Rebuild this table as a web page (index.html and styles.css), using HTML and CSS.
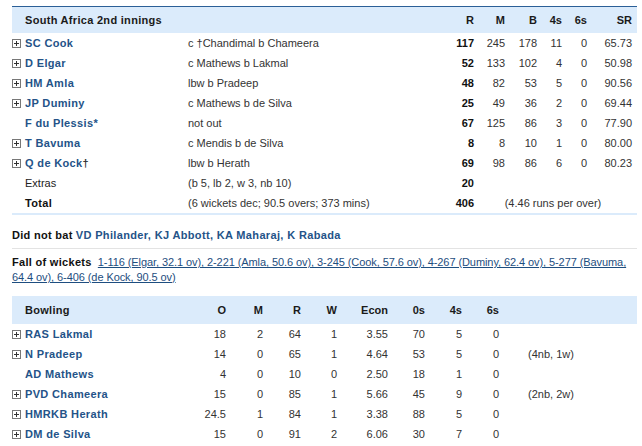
FILE: index.html
```html
<!DOCTYPE html>
<html>
<head>
<meta charset="utf-8">
<link rel="stylesheet" href="styles.css">
</head>
<body>
<div class="page">
  <table class="card bat">
    <colgroup>
      <col class="c-icon"><col class="c-name"><col class="c-dis"><col class="c-r"><col class="c-m"><col class="c-b"><col class="c-4"><col class="c-6"><col class="c-sr"><col class="c-pad">
    </colgroup>
    <thead>
      <tr class="head">
        <th></th><th class="l" colspan="2">South Africa 2nd innings</th><th>R</th><th>M</th><th>B</th><th>4s</th><th>6s</th><th>SR</th><th></th>
      </tr>
    </thead>
    <tbody>
      <tr><td class="ic"><span class="plus"></span></td><td class="name">SC Cook</td><td class="dis">c †Chandimal b Chameera</td><td class="runs">117</td><td>245</td><td>178</td><td>11</td><td>0</td><td>65.73</td><td></td></tr>
      <tr><td class="ic"><span class="plus"></span></td><td class="name">D Elgar</td><td class="dis">c Mathews b Lakmal</td><td class="runs">52</td><td>133</td><td>102</td><td>4</td><td>0</td><td>50.98</td><td></td></tr>
      <tr><td class="ic"><span class="plus"></span></td><td class="name">HM Amla</td><td class="dis">lbw b Pradeep</td><td class="runs">48</td><td>82</td><td>53</td><td>5</td><td>0</td><td>90.56</td><td></td></tr>
      <tr><td class="ic"><span class="plus"></span></td><td class="name">JP Duminy</td><td class="dis">c Mathews b de Silva</td><td class="runs">25</td><td>49</td><td>36</td><td>2</td><td>0</td><td>69.44</td><td></td></tr>
      <tr><td class="ic"></td><td class="name">F du Plessis*</td><td class="dis">not out</td><td class="runs">67</td><td>125</td><td>86</td><td>3</td><td>0</td><td>77.90</td><td></td></tr>
      <tr><td class="ic"><span class="plus"></span></td><td class="name">T Bavuma</td><td class="dis">c Mendis b de Silva</td><td class="runs">8</td><td>8</td><td>10</td><td>1</td><td>0</td><td>80.00</td><td></td></tr>
      <tr><td class="ic"><span class="plus"></span></td><td class="name">Q de Kock<span class="dag">†</span></td><td class="dis">lbw b Herath</td><td class="runs">69</td><td>98</td><td>86</td><td>6</td><td>0</td><td>80.23</td><td></td></tr>
      <tr><td class="ic"></td><td class="plain">Extras</td><td class="dis">(b 5, lb 2, w 3, nb 10)</td><td class="runs">20</td><td colspan="6"></td></tr>
      <tr class="total"><td class="ic"></td><td class="plain strong">Total</td><td class="dis">(6 wickets dec; 90.5 overs; 373 mins)</td><td class="runs">406</td><td class="rpo" colspan="5">(4.46 runs per over)</td><td></td></tr>
    </tbody>
  </table>

  <p class="dnb"><b class="lbl">Did not bat</b> <span class="lk">VD Philander, KJ Abbott, KA Maharaj, K Rabada</span></p>

  <p class="fow"><b class="lbl">Fall of wickets</b>&nbsp; <span class="ul">1-116 (Elgar, 32.1 ov), 2-221 (Amla, 50.6 ov), 3-245 (Cook, 57.6 ov), 4-267 (Duminy, 62.4 ov), 5-277 (Bavuma,</span><br><span class="ul">64.4 ov), 6-406 (de Kock, 90.5 ov)</span></p>

  <table class="card bowl">
    <colgroup>
      <col class="b-icon"><col class="b-name"><col class="b-o"><col class="b-m"><col class="b-r"><col class="b-w"><col class="b-econ"><col class="b-0"><col class="b-4"><col class="b-6"><col class="b-gap"><col class="b-x">
    </colgroup>
    <thead>
      <tr class="head bhead">
        <th></th><th class="l">Bowling</th><th>O</th><th>M</th><th>R</th><th>W</th><th>Econ</th><th>0s</th><th>4s</th><th>6s</th><th></th><th></th>
      </tr>
    </thead>
    <tbody>
      <tr><td class="ic"><span class="plus"></span></td><td class="name">RAS Lakmal</td><td>18</td><td>2</td><td>64</td><td>1</td><td>3.55</td><td>70</td><td>5</td><td>0</td><td></td><td class="x"></td></tr>
      <tr><td class="ic"><span class="plus"></span></td><td class="name">N Pradeep</td><td>14</td><td>0</td><td>65</td><td>1</td><td>4.64</td><td>53</td><td>5</td><td>0</td><td></td><td class="x">(4nb, 1w)</td></tr>
      <tr><td class="ic"></td><td class="name">AD Mathews</td><td>4</td><td>0</td><td>10</td><td>0</td><td>2.50</td><td>18</td><td>1</td><td>0</td><td></td><td class="x"></td></tr>
      <tr><td class="ic"><span class="plus"></span></td><td class="name">PVD Chameera</td><td>15</td><td>0</td><td>85</td><td>1</td><td>5.66</td><td>45</td><td>9</td><td>0</td><td></td><td class="x">(2nb, 2w)</td></tr>
      <tr><td class="ic"><span class="plus"></span></td><td class="name">HMRKB Herath</td><td>24.5</td><td>1</td><td>84</td><td>1</td><td>3.38</td><td>88</td><td>5</td><td>0</td><td></td><td class="x"></td></tr>
      <tr><td class="ic"><span class="plus"></span></td><td class="name">DM de Silva</td><td>15</td><td>0</td><td>91</td><td>2</td><td>6.06</td><td>30</td><td>7</td><td>0</td><td></td><td class="x"></td></tr>
    </tbody>
  </table>
</div>
</body>
</html>
```

FILE: styles.css
```css
html, body {
  margin: 0;
  padding: 0;
  background: #ffffff;
}
body {
  font-family: "Liberation Sans", Arial, sans-serif;
  font-size: 11px;
  color: #333333;
}
.page {
  width: 625px;
  margin-left: 12px;
  padding-top: 6px;
}
.card {
  width: 625px;
  border-collapse: collapse;
  table-layout: fixed;
}
.card th, .card td {
  padding: 0;
  text-align: right;
  white-space: nowrap;
  overflow: visible;
}
.card th.l, .card td.name, .card td.plain, .card td.dis, .card td.x { text-align: left; }

.c-icon { width: 13px; }
.c-name { width: 163px; }
.c-dis { width: 252px; }
.c-r { width: 34px; }
.c-m { width: 31px; }
.c-b { width: 32px; }
.c-4 { width: 25px; }
.c-6 { width: 25px; }
.c-sr { width: 45px; }
.c-pad { width: 5px; }

.head th {
  background: #dbebfb;
  height: 26px;
  font-weight: bold;
  color: #1a1a1a;
  font-size: 11px;
}
.head th.l { letter-spacing: 0.3px; }
.bat .head th { border-top: 1px solid #2b5f97; }
.bat tbody td { height: 20px; }
.bat tr.total td { border-bottom: 2px solid #dbebfb; }

.name {
  font-weight: bold;
  color: #245388;
  letter-spacing: 0.35px;
}
.dag { color: #333; font-weight: bold; }
.plain { color: #222; }
.strong { font-weight: bold; color: #111; letter-spacing: 0.35px; }
.runs { font-weight: bold; color: #111; }
.dis { color: #333; }
td.rpo { text-align: center; }

.ic { text-align: left; vertical-align: middle; }
.plus {
  display: block;
  width: 7px;
  height: 7px;
  border: 1px solid #777;
  position: relative;
  background: #fff;
}
.plus::before, .plus::after {
  content: "";
  position: absolute;
  background: #333;
}
.plus::before { left: 1px; top: 3px; width: 5px; height: 1px; }
.plus::after { left: 3px; top: 1px; width: 1px; height: 5px; }

.lbl { letter-spacing: 0.3px; color: #111; }
.dnb {
  margin: 0;
  padding: 13px 0 5px 0;
  line-height: 15px;
  border-bottom: 1px solid #e3e3e3;
  color: #111;
}
.lk { color: #245388; font-weight: bold; letter-spacing: 0.35px; }
.fow {
  margin: 0;
  padding: 6px 0 11px 0;
  line-height: 15px;
  color: #111;
}
.ul {
  color: #1e4e80;
  text-decoration: underline;
  letter-spacing: -0.08px;
}

.b-icon { width: 13px; }
.b-name { width: 161px; }
.b-o { width: 40px; }
.b-m { width: 37px; }
.b-r { width: 38px; }
.b-w { width: 36px; }
.b-econ { width: 51px; }
.b-0 { width: 37px; }
.b-4 { width: 37px; }
.b-6 { width: 37px; }
.b-gap { width: 29px; }
.b-x { width: 109px; }
.bowl .head th { height: 28px; }
.bowl tbody td { height: 20px; }
.bowl td.x { color: #333; }
```
